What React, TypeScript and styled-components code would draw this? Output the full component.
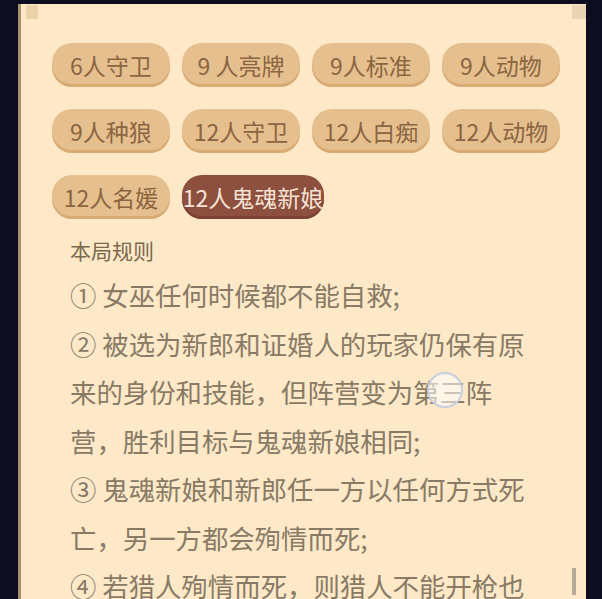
import React from "react"
import styled, {createGlobalStyle} from "styled-components";

const GlobalStyle = createGlobalStyle`
  html, body {
    margin: 0;
    padding: 0;
    background-color: #0c0d21;
    overflow: hidden;
  }
  body {
    font-family: "Noto Sans CJK SC", "Noto Sans", sans-serif;
  }
`

const StyledPage = styled.div`
  position: relative;
  width: 602px;
  height: 599px;
  overflow: hidden;
  background-color: #0c0d21;
`

const StyledPanel = styled.div`
  position: relative;
  margin: 4px 0 0 18px;
  width: 568px;
  height: 595px;
  box-sizing: border-box;
  background-color: #fde9c8;
  border-left: 3px solid #a8916e;
  padding: 39px 0 0 31px;
  overflow: hidden;

  &::before, &::after {
    content: "";
    position: absolute;
    top: 1px;
    width: 12px;
    height: 14px;
    background-color: #ecd2a8;
  }
  &::before {
    left: 5px;
  }
  &::after {
    right: 0;
    width: 14px;
    background-color: #e9d5b6;
  }
`

const StyledModeGrid = styled.div`
  display: grid;
  grid-template-columns: repeat(4, 118px);
  grid-auto-rows: 44px;
  column-gap: 12px;
  row-gap: 22px;
`

const StyledModeButton = styled.div<{
    selected?: boolean,
}>`
  display: flex;
  align-items: center;
  justify-content: center;
  width: ${props => props.selected ? "142px" : "118px"};
  height: 44px;
  box-sizing: border-box;
  border-radius: 20px;
  font-size: 23px;
  white-space: nowrap;
  color: ${props => props.selected ? "#f7e4d6" : "#8a6542"};
  background-color: ${props => props.selected ? "#8d4f3e" : "#e6bf8e"};
  box-shadow: inset 0 -3px 0 ${props => props.selected ? "#7c4334" : "#d8ab75"};
`

const StyledRules = styled.div`
  width: 470px;
  margin: 16px 0 0 18px;
`

const StyledRulesTitle = styled.div`
  font-size: 21px;
  line-height: 30px;
  color: #7a684f;
`

const StyledRuleText = styled.div`
  margin-top: 6px;
  font-size: 26.4px;
  line-height: 48.5px;
  color: #887a65;
`

const StyledScrollbar = styled.div`
  position: absolute;
  right: 10px;
  bottom: 4px;
  width: 4px;
  height: 27px;
  background-color: #b7ab97;
`

const StyledTouchIndicator = styled.div`
  position: absolute;
  left: 427px;
  top: 372px;
  width: 32px;
  height: 32px;
  border-radius: 50%;
  border: 2px solid rgba(196, 204, 222, 0.95);
  background-color: rgba(255, 255, 255, 0.55);
`

const modes = [
    "6人守卫", "9 人亮牌", "9人标准", "9人动物",
    "9人种狼", "12人守卫", "12人白痴", "12人动物",
    "12人名媛", "12人鬼魂新娘",
]

const selectedMode = "12人鬼魂新娘"

export default function App() {
    return (
        <StyledPage>
            <GlobalStyle/>
            <StyledPanel>
                <StyledModeGrid>
                    {modes.map(mode => (
                        <StyledModeButton key={mode} selected={mode === selectedMode}>
                            {mode}
                        </StyledModeButton>
                    ))}
                </StyledModeGrid>
                <StyledRules>
                    <StyledRulesTitle>本局规则</StyledRulesTitle>
                    <StyledRuleText>
                        ① 女巫任何时候都不能自救;
                        <br/>
                        ② 被选为新郎和证婚人的玩家仍保有原来的身份和技能，但阵营变为第三阵<br/>营，胜利目标与鬼魂新娘相同;
                        <br/>
                        ③ 鬼魂新娘和新郎任一方以任何方式死亡，另一方都会殉情而死;
                        <br/>
                        ④ 若猎人殉情而死，则猎人不能开枪也<br/>不能带走任何人;
                    </StyledRuleText>
                </StyledRules>
                <StyledScrollbar/>
            </StyledPanel>
            <StyledTouchIndicator/>
        </StyledPage>
    )
}
